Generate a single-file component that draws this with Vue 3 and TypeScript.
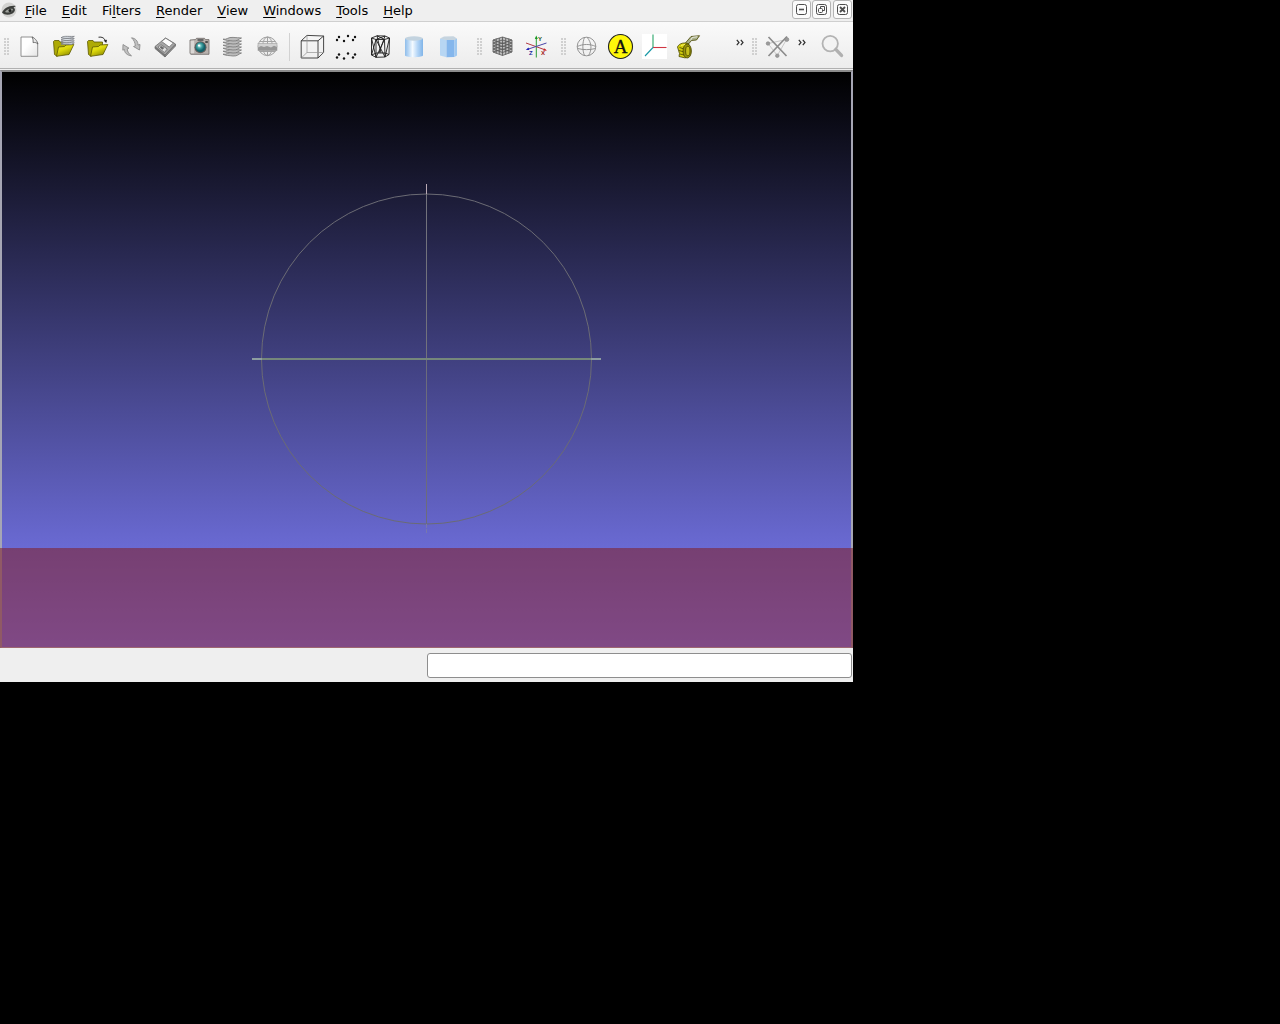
<script setup lang="ts">
interface MenuEntry {
  before: string
  key: string
  after: string
}

interface Tool {
  name: string
  art: string
}

const menus: MenuEntry[] = [
  { before: '', key: 'F', after: 'ile' },
  { before: '', key: 'E', after: 'dit' },
  { before: 'Fi', key: 'l', after: 'ters' },
  { before: '', key: 'R', after: 'ender' },
  { before: '', key: 'V', after: 'iew' },
  { before: '', key: 'W', after: 'indows' },
  { before: '', key: 'T', after: 'ools' },
  { before: '', key: 'H', after: 'elp' },
]

const folder = (id: string): string => `
  <defs><linearGradient id="${id}" x1="0" y1="0" x2="0.6" y2="1"><stop offset="0" stop-color="#f8f53a"/><stop offset="0.5" stop-color="#dcd80c"/><stop offset="1" stop-color="#8f8c00"/></linearGradient></defs>
  <path d="M2.5 6.5 3.5 5.5H8L9 7H17.5V11L6 21.3 3.5 19.5Z" fill="#aeaa05" stroke="#5c5800" stroke-width="0.8"/>
  <path d="M7.5 12 13.5 11.5 15 10 22.8 9.5 18 19.5 5.5 21.3Z" fill="url(#${id})" stroke="#5c5800" stroke-width="0.8" stroke-linejoin="round"/>`

const sheets = (ys: number[]): string =>
  ys
    .map((y) => `<path d="M2 ${y + 1.2}C6 ${y + 2} 7 ${y - 1.2} 12 ${y - 0.6} 15 ${y} 18 ${y - 0.6} 20.5 ${y} 17.5 ${y + 1} 16.5 ${y + 3.4} 12 ${y + 3} 8 ${y + 2.4} 5 ${y + 2.8} 2 ${y + 1.2}Z" fill="#bcbcbc" stroke="#767676" stroke-width="0.8"/>`)
    .join('')

const dots: [number, number][] = [
  [3, 5], [5, 2], [10, 6], [14, 1], [19, 5], [21, 2],
]
const dotArt = [0, 17.5]
  .flatMap((dy) => dots.map(([x, y]) => `<circle cx="${x}" cy="${y + dy}" r="1.2" fill="#111"/>`))
  .join('')

const gridArt = [5, 8, 11, 14, 17]
  .map((y) => `<path d="M3 ${y} 12.5 ${y + 3.5} 22 ${y}M3 ${y} 12.5 ${y - 3} 22 ${y}"/>`)
  .join('')

const fileTools: Tool[] = [
  {
    name: 'New Empty Project',
    art: `<defs><linearGradient id="pg" x1="0" y1="0" x2="1" y2="1"><stop offset="0.4" stop-color="#fff"/><stop offset="1" stop-color="#e4e4e4"/></linearGradient></defs>
      <path d="M4 2H15.5C16 5 18 7 20.7 8V21.3H4Z" fill="url(#pg)" stroke="#777" stroke-width="0.8"/>
      <path d="M15 2C17 2.3 20.6 6 20.8 9 19.3 7.5 18 7.3 16.1 7.6 16.2 5 16 3.5 15 2Z" fill="#e8e8e8" stroke="#555" stroke-width="0.8"/>`,
  },
  {
    name: 'Open Project',
    art: `${folder('fa')}<g stroke="#73777e" stroke-width="0.8" fill="#dfe4ea"><path d="M10 9.2C13 7 15 8 23.3 7.8L20.5 9.6Z"/><path d="M10 7.2C13 5 15 6 23.3 5.8 21 7.4 18 8.4 10 7.2Z"/><path d="M10 5C13 2.8 15 3.8 23.3 3.6 21 5.2 18 6.2 10 5Z"/><path d="M10 2.8C13 0.6 15 1.6 23.3 1.4 21 3 18 4 10 2.8Z"/></g>`,
  },
  {
    name: 'Import Mesh',
    art: `${folder('fb')}<path d="M13.5 2.2C17 1.6 19.5 3 20.5 6" fill="none" stroke="#333" stroke-width="1"/><path d="M18.6 5.6 22 4.8 21.3 8Z" fill="#222"/>`,
  },
  {
    name: 'Reload',
    art: `<g fill="#c0c0c0" stroke="#8c8c8c" stroke-width="0.9" stroke-linejoin="round"><path d="M12.5 2.8C16.5 3.3 19 6 19 10L21 9.5 20.5 15 14.5 11.5 16.3 11C16.3 8 15 5 12.5 2.8Z"/><path d="M4 9.5 10 13.2 8.2 13.8C8.5 17 10 19 12.5 20.8 8 20.5 5.3 17.5 5.5 14.5L3.8 15.2Z"/></g>`,
  },
  {
    name: 'Export Mesh',
    art: `<g stroke="#6e6e6e" stroke-width="0.8" stroke-linejoin="round"><path d="M2 11.5 12 20V22L2 13.5Z" fill="#777"/><path d="M12 20 22.5 9V11L12 22Z" fill="#8b8b8b"/><path d="M2 11.5 12.5 3 22.5 9 12 20Z" fill="#a6a6a6"/><path d="M8.5 6.4 12.7 3.2 20.4 8 16.2 12Z" fill="#fcfcfc"/><path d="M5 12.2 8 9.7 14.3 14 11.4 17.5Z" fill="#dedede"/><path d="M7 12.2 8.4 11.2 10.8 13 9.4 14.2Z" fill="#666"/></g>`,
  },
  {
    name: 'Snapshot',
    art: `<defs><radialGradient id="ln" cx="0.4" cy="0.35"><stop offset="0" stop-color="#c9f5f2"/><stop offset="0.5" stop-color="#3fa0a0"/><stop offset="1" stop-color="#12616a"/></radialGradient></defs>
      <path d="M3 5 8.5 4.6 9.5 3.3H17.5L18.5 4.6H22V19.3H4L3 18.5Z" fill="#b8b2ae" stroke="#6a6663" stroke-width="0.8"/><path d="M3.6 5.8V18.3H7.2V5.4Z" fill="#dad7d5"/><rect x="10.5" y="4" width="6" height="2" fill="#666"/><rect x="18.3" y="6" width="2.5" height="2" fill="#4d4d4d"/>
      <circle cx="13.5" cy="12.3" r="6" fill="#625c5a"/><circle cx="13.5" cy="12.3" r="5" fill="url(#ln)"/><circle cx="12" cy="10.5" r="1.1" fill="#fff"/>`,
  },
  { name: 'Show Layer Dialog', art: sheets([18, 15, 12, 9, 6, 3]) },
  {
    name: 'Show Raster',
    art: `<g fill="none" stroke="#a3a3a3" stroke-width="1"><circle cx="12.5" cy="11.3" r="9.3" fill="#eee"/><ellipse cx="12.5" cy="11.3" rx="4.8" ry="9.3"/><path d="M12.5 2V21M4.5 6.5H20.5M4.5 16.5H20.5"/></g><rect x="3" y="8.5" width="19" height="7" fill="#d2d2d2" stroke="#aaa" stroke-width="0.7"/><path d="M3 12.5 6 11 9 12 12 11 16 12.5 19 10.8 22 12V15.5H3Z" fill="#969696"/>`,
  },
]

const renderTools: Tool[] = [
  {
    name: 'Bounding Box',
    art: `<g fill="none" stroke="#333" stroke-width="0.9"><path d="M1.2 5.8H18V23H1.2ZM1.2 5.8 7 0.4 23.6 1 18 5.8M23.6 1V17.5L18 23"/><path d="M7 0.4V17.5H23.6M7 17.5 1.2 23" stroke="#929292" stroke-width="0.7"/></g>`,
  },
  { name: 'Points', art: dotArt },
  {
    name: 'Wireframe',
    art: `<g fill="none" stroke="#1d1d1d" stroke-width="0.9" stroke-linejoin="round"><path d="M3.5 3 9 0.8 17 1 21.5 3 21 19.5 17 22 8 22.3 3.5 20ZM3.5 3 8 4.5 16.5 4.5 21.5 3M3.5 20 8.5 18 17 18 21 19.5M8 4.5 8 22.3M16.5 4.5 17 22M3.5 3 8 22.3M8 4.5 17 22M16.5 4.5 8 22.3M21.5 3 17 22M9 0.8 16.5 4.5M17 1 8 4.5 3.5 20M9 0.8 13 18M17 1 11 18"/></g>`,
  },
  {
    name: 'Smooth Shading',
    art: `<defs><linearGradient id="cs"><stop offset="0" stop-color="#8fbdea"/><stop offset="0.18" stop-color="#b5d5f4"/><stop offset="0.42" stop-color="#f4faff"/><stop offset="0.7" stop-color="#b4d5f6"/><stop offset="1" stop-color="#80b4e8"/></linearGradient></defs><path d="M3 3.5V20.5C5 22.8 19 22.8 21 20.5V3.5Z" fill="url(#cs)"/><ellipse cx="12" cy="3.5" rx="9" ry="2.2" fill="#c3d3df"/>`,
  },
  {
    name: 'Flat Shading',
    art: `<path d="M4 3.5V20.5L10.5 22.3V4.5Z" fill="#b7d6f3"/><path d="M10.5 4.5V22.3L18.5 22V4.5Z" fill="#84b6ec"/><path d="M18.5 4.5V22L21 20.5V3.5Z" fill="#9fc8f0"/><path d="M4 3.5 8 1.5 17.5 1.3 21 3.5 18.5 5H10Z" fill="#c6d4df"/>`,
  },
]

const gridTools: Tool[] = [
  {
    name: 'Show Quality Grid',
    art: `<path d="M3 5 12.5 2 22 5V17L12.5 20.5 3 17Z" fill="#bdbdbd"/><g fill="none" stroke="#555" stroke-width="0.8">${gridArt}<path d="M3 5V17M6.2 3.5V18.5M9.3 3V19.5M12.5 2V20.5M15.7 3V19.5M18.8 3.5V18.5M22 5V17"/></g>`,
  },
  {
    name: 'Show Axis',
    art: `<g fill="none" stroke-width="1"><path d="M12.3 22.5V2" stroke="#2a9a35"/><path d="M2 8 21.5 15" stroke="#b23a45"/><path d="M22.5 8 3 14.5" stroke="#4a45a8"/></g><path d="M10.8 4 12.3 0.5 13.8 4Z" fill="#1a9a25"/><path d="M23 15.6 20 13.2 19.3 15.7Z" fill="#c22"/><path d="M1.8 15 4.5 12.6 5.3 15Z" fill="#22b"/><g font-family="Liberation Sans, sans-serif" font-weight="bold" font-size="6"><text x="14" y="5.5" fill="#174e1c">Y</text><text x="17" y="20" fill="#a01515">X</text><text x="5" y="20" fill="#1d1d9c">Z</text></g>`,
  },
]

const editTools: Tool[] = [
  {
    name: 'Show Trackball',
    art: `<g fill="none" stroke="#8a8a8a" stroke-width="0.9"><circle cx="12.5" cy="11.5" r="9.3"/><path d="M10.5 2.3C8.3 8 8.3 15 10.5 20.7M13 2.2C18 8 18 15 14.5 20.7M3.3 11.5C9 8.8 16 8.8 21.8 11.5M3.8 13.5C9 15 16 15 21.4 13.5"/></g>`,
  },
  {
    name: 'Show Info Pane',
    art: `<circle cx="12.5" cy="11.5" r="12" fill="#fff80a" stroke="#222" stroke-width="1.1"/><text x="12.5" y="18" text-anchor="middle" font-family="Liberation Serif, serif" font-size="19" fill="#111" stroke="#111" stroke-width="0.3">A</text>`,
  },
  {
    name: 'Show Origin',
    art: `<rect y="-1" width="25" height="25" fill="#fff"/><g fill="none" stroke-width="1.1"><path d="M11 -0.5V12.5" stroke="#27a567"/><path d="M11 12.5H24.5" stroke="#cf3542"/><path d="M11 12.5 3 21" stroke="#1597a5"/></g>`,
  },
  {
    name: 'Measuring Tool',
    art: `<g stroke="#474500" stroke-width="0.8" stroke-linejoin="round"><path d="M9 8.5 15 1.5 23.5 0.7 20.5 5 15.5 5.5 12.5 9Z" fill="#a9b08a"/><path d="M14.5 5.3 16.5 2.3 21.5 1.7" fill="none" stroke="#fff"/><path d="M1.5 12C3 8 9 7 13 9L9.5 23 3 21.5 3.5 18.5Z" fill="#d2cd0e"/><path d="M3.5 12.5 8 14M3 15.5 8 17M4 19 8 20" fill="none"/><ellipse cx="11.2" cy="16" rx="4.2" ry="7" fill="#99940a"/><ellipse cx="11.8" cy="16" rx="2.2" ry="4.8" fill="#c6c01c"/><path d="M5 10.5 9 9.5" stroke="#fffa70"/></g>`,
  },
]

const selectArt = `<g stroke="#bdbdbd" stroke-width="0.8" fill="none"><path d="M3 8.5 12.3 20.5 21.5 4.5Z"/></g><g stroke="#8c8c8c" stroke-width="1.7" fill="none"><path d="M3.5 2 21.5 21M22 1.5 3.5 21"/></g><g fill="#9b9b9b" stroke="#858585" stroke-width="0.6"><circle cx="3" cy="8.5" r="1.8"/><circle cx="21.8" cy="4.5" r="2"/><circle cx="12.3" cy="20.7" r="1.8"/></g>`

const searchArt = `<circle cx="10.2" cy="8.6" r="7.7" fill="#f3f3f3" stroke="#b3b3b3" stroke-width="1.8"/><path d="M15.8 14.4 21.5 20.4" stroke="#b0b0b0" stroke-width="3.4" stroke-linecap="round"/>`
</script>

<template>
  <main class="window">
    <header class="menubar">
      <svg class="logo" viewBox="0 0 16 16" aria-hidden="true">
        <circle cx="8" cy="8" r="7.5" fill="#d2d2d0" />
        <path d="M1 10.5C3 6.5 8 3 15 4L12.5 5.5C15 7 14 10 11.5 11.5 7 13.5 3.5 13 1 10.5Z" fill="#3c3e3b" />
        <path d="M4 10C5 7.5 9 6 12 7 11.5 10 8 11.5 4 10Z" fill="#9fa29d" />
        <circle cx="9" cy="8.5" r="1.5" fill="#1c1e1c" />
      </svg>
      <nav class="menus">
        <button v-for="m in menus" :key="m.key + m.after" type="button">{{ m.before }}<u>{{ m.key }}</u>{{ m.after }}</button>
      </nav>
      <div class="controls">
        <button type="button" aria-label="Minimize">
          <svg viewBox="0 0 13 13"><rect x="1.5" y="1.5" width="10" height="10" rx="2" /><path d="M4 6.5H9" stroke-width="1.6" /></svg>
        </button>
        <button type="button" aria-label="Restore">
          <svg viewBox="0 0 13 13"><rect x="1.5" y="1.5" width="10" height="10" rx="2" /><rect x="3.5" y="5.5" width="4" height="4" rx="1" /><path d="M5.5 5.5V3.5H9.5V7.5H7.5" /></svg>
        </button>
        <button type="button" class="close" aria-label="Close">
          <svg viewBox="0 0 13 13"><rect x="1.5" y="1.5" width="10" height="10" rx="2" /><path d="M4 4 9 9M9 4 4 9" stroke-width="1.8" /></svg>
        </button>
      </div>
    </header>

    <div class="toolbar">
      <div class="group">
        <span class="handle"></span>
        <button v-for="t in fileTools" :key="t.name" class="tool" type="button" :aria-label="t.name">
          <svg viewBox="0 0 24 24" v-html="t.art"></svg>
        </button>
        <span class="separator"></span>
        <button v-for="t in renderTools" :key="t.name" class="tool" type="button" :aria-label="t.name">
          <svg viewBox="0 0 24 24" v-html="t.art"></svg>
        </button>
      </div>
      <div class="group">
        <span class="handle"></span>
        <button v-for="t in gridTools" :key="t.name" class="tool" type="button" :aria-label="t.name">
          <svg viewBox="0 0 24 24" v-html="t.art"></svg>
        </button>
      </div>
      <div class="group">
        <span class="handle"></span>
        <button v-for="t in editTools" :key="t.name" class="tool" type="button" :aria-label="t.name">
          <svg viewBox="0 0 24 24" v-html="t.art"></svg>
        </button>
      </div>
      <div class="group trailing">
        <button class="more" type="button" aria-label="More editing tools">
          <svg viewBox="0 0 8 7"><path d="M0.8 0.8 3 3.5 0.8 6.2M4.8 0.8 7 3.5 4.8 6.2" /></svg>
        </button>
        <span class="handle"></span>
        <button class="tool" type="button" aria-label="Delete Selected"><svg viewBox="0 0 24 24" v-html="selectArt"></svg></button>
        <button class="more" type="button" aria-label="More selection tools">
          <svg viewBox="0 0 8 7"><path d="M0.8 0.8 3 3.5 0.8 6.2M4.8 0.8 7 3.5 4.8 6.2" /></svg>
        </button>
      </div>
      <button class="tool" type="button" aria-label="Search"><svg viewBox="0 0 24 24" v-html="searchArt"></svg></button>
    </div>

    <section class="canvas" aria-label="3D view">
      <svg class="trackball" viewBox="0 0 349 350" aria-hidden="true">
        <circle cx="174.5" cy="175" r="165" fill="none" stroke="#6b6b74" />
        <path d="M174.5 10V175" stroke="#72727c" />
        <path d="M174.5 175V340" stroke="#6c6c7c" />
        <path d="M174.5 0V10" stroke="#b9a9b4" />
        <path d="M174.5 340V349" stroke="#7878ac" stroke-dasharray="4 1" />
        <path d="M0 175H349" stroke="#8d9da0" stroke-width="2" />
        <path d="M10 175H339" stroke="#75877b" stroke-width="2" />
      </svg>
      <div class="log"></div>
    </section>

    <footer class="status">
      <input type="text" aria-label="Progress" readonly />
    </footer>
  </main>
</template>

<style>
html,
body {
  background: #000;
}
</style>

<style scoped>
.window {
  display: flex;
  flex-direction: column;
  width: 66.64vw;
  min-height: 66.6vh;
  background: #efefef;
  color: #000;
  font-family: "DejaVu Sans", sans-serif;
  font-size: 13px;
  line-height: 16px;
}

button {
  margin: 0;
  padding: 0;
  border: 0;
  background: none;
  color: inherit;
  font: inherit;
}

svg {
  display: block;
  overflow: visible;
}

.menubar {
  display: flex;
  align-items: flex-start;
  height: 21px;
  border-bottom: 1px solid #cfcfcf;
}

.logo {
  width: 16px;
  height: 16px;
  margin: 2px 0 0 1px;
}

.menus {
  display: flex;
  gap: 15px;
  padding: 3px 0 0 8px;
}

.menus u {
  text-underline-offset: 2px;
}

.controls {
  display: flex;
  gap: 1px;
  margin-left: auto;
  padding-right: 1px;
}

.controls button {
  box-sizing: border-box;
  display: grid;
  place-items: center;
  width: 19px;
  height: 19px;
  border: 1px solid #b4b4b4;
  border-radius: 3px;
  background: #fbfbfb;
}

.controls .close {
  margin-left: 1px;
}

.controls svg {
  width: 13px;
  height: 13px;
  fill: none;
  stroke: #4c4c4c;
}

.toolbar {
  display: flex;
  box-sizing: border-box;
  align-items: center;
  height: 47px;
  padding: 4px 4px 0 0;
  border-bottom: 1px solid #b0b0b0;
  background: linear-gradient(#fafafa, #ececec);
}

.group {
  display: flex;
  align-items: center;
}

.group + .group {
  margin-left: 8px;
}

.group:nth-child(3) {
  margin-left: 4px;
}

.group.trailing {
  margin: 0 5px 0 auto;
}

.handle {
  width: 6px;
  height: 18px;
  margin: 0 2px 0 4px;
  background: radial-gradient(circle at 1px 1px, #d0d0d0 35%, transparent 50%) 0 0 / 3px 3px;
}

.tool {
  display: grid;
  place-items: center;
  width: 34px;
  height: 34px;
}

.tool svg {
  width: 24px;
  height: 24px;
}

.separator {
  width: 1px;
  height: 28px;
  margin: 0 5px;
  background: #d2d2d2;
}

.more {
  display: flex;
  justify-content: center;
  width: 16px;
  height: 16px;
}

.more svg {
  width: 8px;
  height: 7px;
  fill: none;
  stroke: #2e2e2e;
  stroke-width: 1.2;
}

.canvas {
  position: relative;
  display: grid;
  flex: 1;
  place-items: center;
  margin-top: 1px;
  border: solid;
  border-width: 2px 2px 1px;
  border-color: #8b8b8b #a6a6b4 #c5c5d0;
  background: linear-gradient(#000, #8080ff);
}

.trackball {
  width: 349px;
  height: 350px;
}

.log {
  position: absolute;
  right: -2px;
  bottom: -1px;
  left: -2px;
  height: 100px;
  background: rgba(128, 32, 40, 0.57);
}

.status {
  display: flex;
  justify-content: flex-end;
  padding: 5px 1px 4px 0;
}

.status input {
  box-sizing: border-box;
  width: calc(50% - 1px);
  height: 25px;
  padding: 0 4px;
  border: 1px solid #8e8e8e;
  border-radius: 3px;
  background: #fff;
  font: inherit;
}
</style>
